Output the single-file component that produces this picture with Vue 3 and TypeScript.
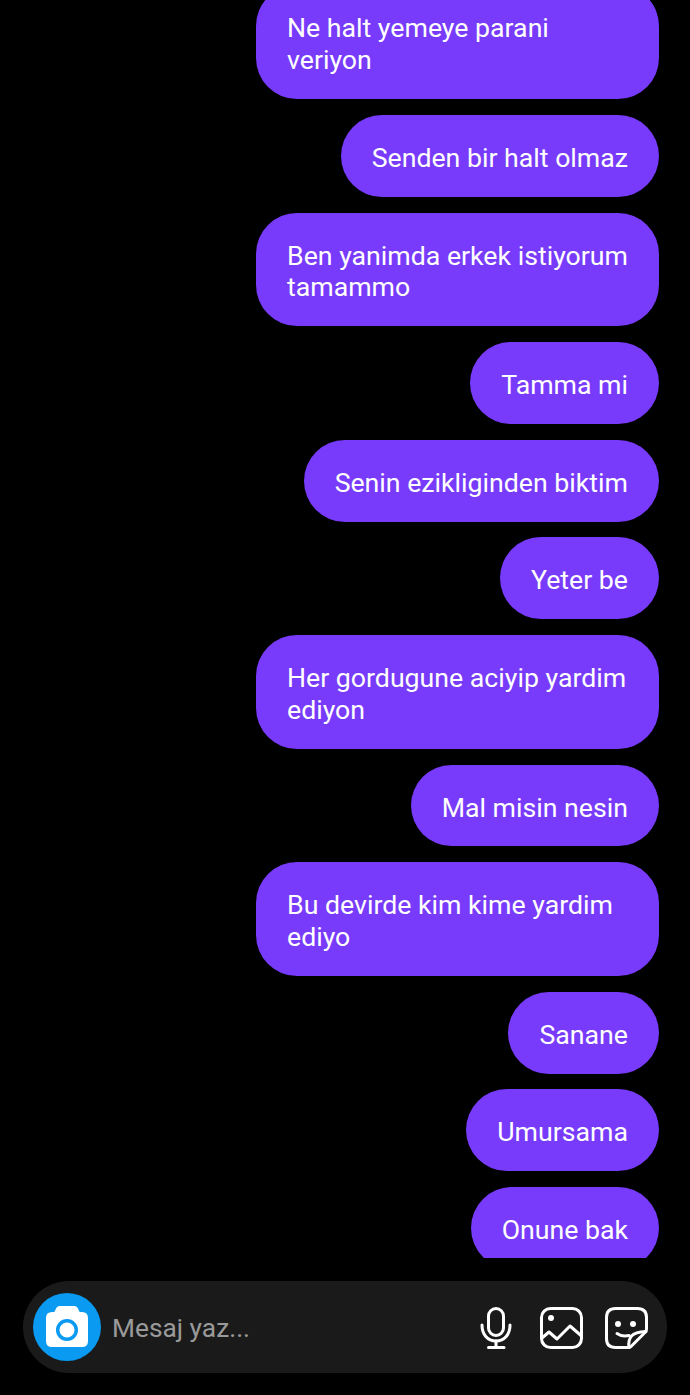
<template>
  <div class="screen">
    <div class="thread">
      <div class="list">
        <div v-for="(m, i) in messages" :key="i" class="bubble">{{ m }}</div>
      </div>
    </div>
    <div class="composer">
      <div class="camera">
        <svg class="camera-icon" width="42" height="41" viewBox="0 0 42 41">
          <path d="M13.500 0h15q2 0 3 1.800l2.200 4.200h2.300q6 0 6 6v23q0 6-6 6h-30q-6 0-6-6v-23q0-6 6-6h2.300l2.200-4.200q1-1.800 3-1.800z" fill="#fff" />
          <circle cx="21" cy="24" r="9.300" fill="none" stroke="#0a9af2" stroke-width="3.500" />
        </svg>
      </div>
      <span class="placeholder">Mesaj yaz...</span>
      <div class="actions">
        <svg class="mic" width="32" height="42" viewBox="0 0 32 42" fill="none" stroke="#fff" stroke-width="3" stroke-linecap="round">
          <rect x="8.500" y="1.500" width="15" height="27" rx="7.500" />
          <path d="M2 18c0 9.500 5.500 16 14 16s14-6.500 14-16" />
          <path d="M16 34v6.500M8.500 40.500h15.500" />
        </svg>
        <svg width="43" height="42" viewBox="0 0 43 42" fill="none" stroke="#fff" stroke-width="3" stroke-linejoin="round" stroke-linecap="round">
          <rect x="1.500" y="1.500" width="40" height="39" rx="9" />
          <path d="M2 31l7-6 8 7 13-13 11.500 10" />
          <circle cx="11" cy="11" r="3" fill="#fff" stroke="none" />
        </svg>
        <svg width="43" height="42" viewBox="0 0 43 42" fill="none" stroke="#fff" stroke-width="3" stroke-linejoin="round" stroke-linecap="round">
          <path d="M23 40.500h-12.500q-9 0-9-9v-21q0-9 9-9h22q9 0 9 9v11.500q0 2-1.500 3.500l-14 14q-1.500 1.500-3.500 1.500z" />
          <path d="M24 40q-1-7 2.500-11 3.500-4 14.500-4.500" />
          <path d="M12 26.500q5 3.500 12 2" />
          <circle cx="13" cy="17" r="3" fill="#fff" stroke="none" />
          <circle cx="28" cy="17" r="3" fill="#fff" stroke="none" />
        </svg>
      </div>
    </div>
  </div>
</template>

<script setup lang="ts">
const messages: string[] = [
  "Ne halt yemeye parani veriyon",
  "Senden bir halt olmaz",
  "Ben yanimda erkek istiyorum tamammo",
  "Tamma mi",
  "Senin ezikliginden biktim",
  "Yeter be",
  "Her gordugune aciyip yardim ediyon",
  "Mal misin nesin",
  "Bu devirde kim kime yardim ediyo",
  "Sanane",
  "Umursama",
  "Onune bak",
];
</script>

<style scoped>
.screen {
  width: 690px;
  height: 1395px;
  background: #000;
  overflow: hidden;
  font-family: Roboto, "Liberation Sans", sans-serif;
}

.thread {
  height: 1258px;
  overflow: hidden;
}

.list {
  margin-top: -14.6px;
  padding-right: 31px;
  display: flex;
  flex-direction: column;
  align-items: flex-end;
  gap: 15.9px;
}

.bubble {
  box-sizing: border-box;
  max-width: 403px;
  padding: 28px 31px 22px;
  border-radius: 41px;
  background: #783bfb;
  color: #fff;
  font-size: 26.7px;
  line-height: 31.8px;
}

.composer {
  margin: 23px 23px 0;
  height: 92px;
  padding: 0 19px 0 10px;
  border-radius: 46px;
  background: #1a1a1a;
  display: flex;
  align-items: center;
}

.camera {
  width: 68px;
  height: 68px;
  border-radius: 50%;
  background: #0a9af2;
  display: flex;
  align-items: center;
  justify-content: center;
}

.camera-icon {
  margin-top: -1px;
}

.placeholder {
  margin-left: 11px;
  margin-top: 2px;
  color: #9a9a9a;
  font-size: 26.3px;
}

.actions {
  margin-left: auto;
  display: flex;
  align-items: center;
  gap: 22px;
  margin-top: 2px;
}

.mic {
  margin-right: 6px;
}

svg {
  display: block;
}
</style>
